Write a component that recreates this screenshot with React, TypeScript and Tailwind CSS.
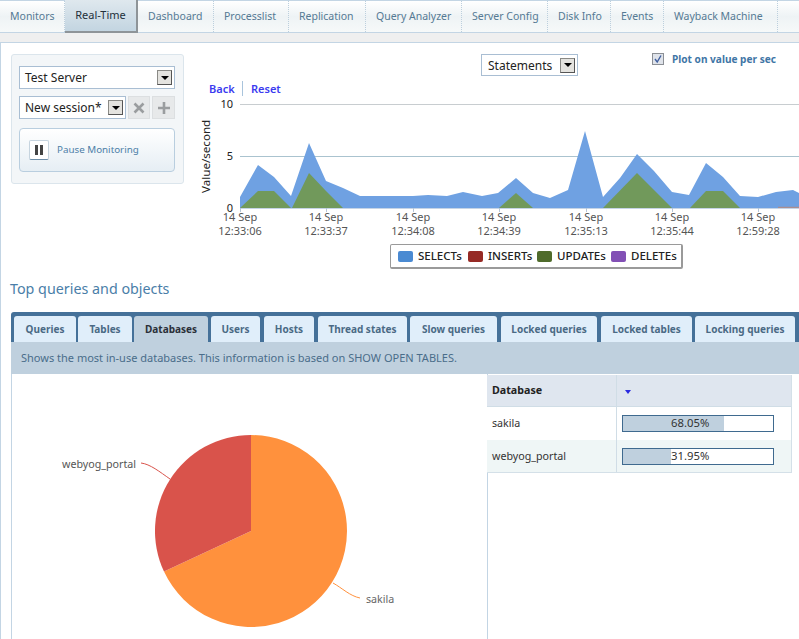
const nav = [
  { t: "Monitors", w: 65, px: 10 },
  { t: "Real-Time", w: 73, px: 10, active: true },
  { t: "Dashboard", w: 76, px: 10 },
  { t: "Processlist", w: 75, px: 10 },
  { t: "Replication", w: 77, px: 10 },
  { t: "Query Analyzer", w: 96, px: 10 },
  { t: "Server Config", w: 86, px: 10 },
  { t: "Disk Info", w: 63, px: 10 },
  { t: "Events", w: 53, px: 10 },
  { t: "Wayback Machine", w: 114, px: 10 },
];

const tabs = [
  { t: "Queries", x: 14, w: 62 },
  { t: "Tables", x: 78, w: 54 },
  { t: "Databases", x: 134, w: 74, active: true },
  { t: "Users", x: 211, w: 49 },
  { t: "Hosts", x: 264, w: 50 },
  { t: "Thread states", x: 318, w: 89 },
  { t: "Slow queries", x: 410, w: 87 },
  { t: "Locked queries", x: 501, w: 96 },
  { t: "Locked tables", x: 601, w: 91 },
  { t: "Locking queries", x: 695, w: 100 },
];

const ticks = [
  { x: 240, t: "12:33:06" },
  { x: 326, t: "12:33:37" },
  { x: 413, t: "12:34:08" },
  { x: 499, t: "12:34:39" },
  { x: 586, t: "12:35:13" },
  { x: 672, t: "12:35:44" },
  { x: 758, t: "12:59:28" },
];

const blue =
  "240,208 240,197 258,165 274,177 291,196 309,143 326,181 343,188 360,196 413,196 428,195 447,196 463,192 482,196 498,193 516,178 533,193 550,198 568,190 585,131 603,197 620,178 637,154 654,171 672,192 689,195 706,163 723,177 740,196 758,197 776,192 793,190 799,193 799,208";

function Arrow({ size = 15 }: { size?: number }) {
  return (
    <span
      className="flex items-center justify-center shrink-0 bg-[#e4e3df] border border-t-[#8a8a86] border-l-[#8a8a86] border-b-[#555] border-r-[#555]"
      style={{ width: size, height: size }}
    >
      <span className="block w-0 h-0 border-x-[4px] border-x-transparent border-t-[4px] border-t-black" />
    </span>
  );
}

function Select({ x, y, w, h, label, pl = 5 }: { x: number; y: number; w: number; h: number; label: string; pl?: number }) {
  return (
    <div
      className="absolute flex items-center justify-between bg-white border border-[#a9bed3] pr-[2px] text-[12px] text-[#222] font-['Liberation_Sans',sans-serif]"
      style={{ left: x, top: y, width: w, height: h, paddingLeft: pl }}
    >
      <span className="leading-none whitespace-nowrap pt-px">{label}</span>
      <Arrow />
    </div>
  );
}

export default function App() {
  return (
    <div className="relative w-[799px] h-[639px] overflow-hidden bg-white font-['Noto_Sans','DejaVu_Sans',sans-serif] text-[11px]">
      {/* Top nav */}
      <div className="absolute left-0 top-0 w-[799px] h-[33px] flex border-t border-b border-[#c3d5e4] bg-gradient-to-b from-white via-[#eef3f5] to-[#f6f9f9]">
        {nav.map((n) =>
          n.active ? (
            <div
              key={n.t}
              className="h-[33px] -mt-px flex items-center justify-center bg-gradient-to-b from-[#dfe8ee] to-[#c3d5e1] border-r-2 border-b-2 border-[#8e9498] text-[#23303b] text-[11px]"
              style={{ width: n.w }}
            >
              {n.t}
            </div>
          ) : (
            <div
              key={n.t}
              className="h-full flex items-center border-r border-dotted border-[#bccfdd] text-[#557a94] text-[10.5px]"
              style={{ width: n.w, paddingLeft: n.px }}
            >
              {n.t}
            </div>
          )
        )}
      </div>
      <div className="absolute left-0 top-[33px] w-[799px] h-[10px] bg-[#efefef] border-b border-[#c3d5e4]" />
      <div className="absolute left-0 top-[43px] w-px h-[596px] bg-[#c3d5e4]" />

      {/* Left panel */}
      <div className="absolute left-[11px] top-[54px] w-[173px] h-[130px] bg-[#f3f6f8] border border-[#dbe5ec] rounded-[3px]" />
      <Select x={19} y={66} w={156} h={23} label="Test Server" />
      <Select x={19} y={96} w={107} h={23} label="New session*" />
      <div className="absolute left-[128px] top-[96px] w-[22px] h-[23px] bg-[#e7e9ea] border border-[#dcdfe1] flex items-center justify-center">
        <svg width="12" height="12" viewBox="0 0 12 12">
          <path d="M1.5 1.5 L10.5 10.5 M10.5 1.5 L1.5 10.5" stroke="#9a9d9f" strokeWidth="2.6" />
        </svg>
      </div>
      <div className="absolute left-[152px] top-[96px] w-[23px] h-[23px] bg-[#e7e9ea] border border-[#dcdfe1] flex items-center justify-center">
        <svg width="12" height="12" viewBox="0 0 12 12">
          <path d="M6 0 V12 M0 6 H12" stroke="#9a9d9f" strokeWidth="2.6" />
        </svg>
      </div>
      <div className="absolute left-[19px] top-[128px] w-[156px] h-[44px] rounded-[4px] border border-[#b9cedf] bg-gradient-to-b from-white to-[#e6eef4] flex items-center pl-[9px]">
        <div className="w-[20px] h-[20px] bg-white border border-[#c6d4df] border-b-[#6d8da8] rounded-[2px] flex items-center justify-center gap-[2px]">
          <span className="block w-[3px] h-[10px] bg-[#444]" />
          <span className="block w-[3px] h-[10px] bg-[#444]" />
        </div>
        <span className="ml-[8px] text-[9.8px] text-[#4d80a8]">Pause Monitoring</span>
      </div>

      {/* Chart controls */}
      <Select x={481} y={54} w={97} h={22} label="Statements" pl={6} />
      <div className="absolute left-[652px] top-[53px] w-[12px] h-[12px] bg-[#dfe3ea] border border-[#8b8f95] flex items-center justify-center">
        <svg width="10" height="10" viewBox="0 0 10 10">
          <path d="M2 5 L4.2 8 L8 1.5" fill="none" stroke="#3f5f9f" strokeWidth="1.4" />
        </svg>
      </div>
      <div className="absolute left-[672px] top-[52px] text-[10.1px] leading-[14px] font-bold text-[#3f76a6]">Plot on value per sec</div>
      <div className="absolute left-[209px] top-[81px] text-[11px] leading-[16px] font-semibold text-[#3b3bf0]">Back</div>
      <div className="absolute left-[242px] top-[81px] w-px h-[15px] bg-[#a9c4dc]" />
      <div className="absolute left-[251px] top-[81px] text-[11px] leading-[16px] font-semibold text-[#3b3bf0]">Reset</div>

      {/* Chart */}
      <div className="absolute left-[199px] top-[193px] origin-top-left -rotate-90 w-[80px] text-[11.6px] leading-[14px] text-[#222] whitespace-nowrap">Value/second</div>
      <div className="absolute left-[200px] top-[97px] w-[33px] text-right text-[11px] leading-[14px] text-[#222]">10</div>
      <div className="absolute left-[200px] top-[149px] w-[33px] text-right text-[11px] leading-[14px] text-[#222]">5</div>
      <div className="absolute left-[200px] top-[204px] w-[33px] text-right text-[11px] leading-[8px] text-[#222]">0</div>
      <svg className="absolute left-0 top-0" width="799" height="225" viewBox="0 0 799 225">
        <line x1="240" y1="104.5" x2="799" y2="104.5" stroke="#c8cdd0" strokeWidth="1" />
        <line x1="240" y1="156.5" x2="799" y2="156.5" stroke="#aac3cf" strokeWidth="1" />
        <polygon points={blue} fill="#6fa1e2" />
        <polygon points="240,208 258,191 274,191 291,208 292,208 309,173 326,191 343,208" fill="#71995b" />
        <polygon points="499,208 516,193 533,208" fill="#71995b" />
        <polygon points="603,208 637,173 672,208" fill="#71995b" />
        <polygon points="690,208 706,191 723,191 740,208" fill="#71995b" />
        <line x1="778" y1="207.3" x2="799" y2="207.3" stroke="#b98a7c" strokeWidth="1" />
        <line x1="240" y1="208.5" x2="799" y2="208.5" stroke="#c5d4e6" strokeWidth="1" />
        {ticks.map((k) => (
          <line key={k.x} x1={k.x + 0.5} y1="208" x2={k.x + 0.5} y2="212" stroke="#b5c6d8" />
        ))}
      </svg>
      {ticks.map((k) => (
        <div
          key={k.x}
          className="absolute top-[210px] w-[70px] text-center text-[11px] leading-[13.5px] text-[#555]"
          style={{ left: k.x - 35 }}
        >
          <div>14 Sep</div>
          <div>{k.t}</div>
        </div>
      ))}

      {/* Legend */}
      <div className="absolute left-[390px] top-[244px] w-[293px] h-[25px] bg-white border border-[#9a9a9a] border-b-2 border-r-2 rounded-[2px] flex items-center pl-[7px] text-[11.5px] font-medium text-[#222]">
        <span className="w-[15px] h-[11px] rounded-[2px] bg-[#4a8ad2]" />
        <span className="ml-[5px] w-[50px]">SELECTs</span>
        <span className="w-[15px] h-[11px] rounded-[2px] bg-[#962a25]" />
        <span className="ml-[5px] w-[49px]">INSERTs</span>
        <span className="w-[15px] h-[11px] rounded-[2px] bg-[#4f6b2b]" />
        <span className="ml-[5px] w-[54px]">UPDATEs</span>
        <span className="w-[15px] h-[11px] rounded-[2px] bg-[#8250b5]" />
        <span className="ml-[5px]">DELETEs</span>
      </div>

      <div className="absolute left-[10px] top-[279px] text-[14.3px] leading-[20px] text-[#4a7ea8]">Top queries and objects</div>

      {/* Tab strip */}
      <div className="absolute left-[11px] top-[312px] w-[788px] h-[31px] bg-[#457199] rounded-tl-[3px]" />
      {tabs.map((t) => (
        <div
          key={t.t}
          className={
            t.active
              ? "absolute top-[316px] h-[27px] flex items-center justify-center rounded-t-[3px] bg-[#bfd0de] text-[10px] font-bold text-[#2a2f38]"
              : "absolute top-[316px] h-[27px] flex items-center justify-center rounded-t-[3px] bg-[#e0eefa] text-[10px] font-bold text-[#4a6a85]"
          }
          style={{ left: t.x, width: t.w }}
        >
          {t.t}
        </div>
      ))}
      <div className="absolute left-[11px] top-[342px] w-[788px] h-[32px] bg-[#bfd0de] flex items-center pl-[10px] text-[11px] text-[#4a6d8a]">
        Shows the most in-use databases. This information is based on SHOW OPEN TABLES.
      </div>
      <div className="absolute left-[11px] top-[374px] w-px h-[265px] bg-[#c3d5e4]" />
      <div className="absolute left-[487px] top-[374px] w-px h-[265px] bg-[#c3d5e4]" />

      {/* Table */}
      <div className="absolute left-[487px] top-[375px] w-[305px] h-[98px] border-r border-b border-[#d4e0e8] text-[10.7px] text-[#333]">
        <div className="flex h-[32px] bg-[#dfe6ef] border-b border-[#d0dde6]">
          <div className="w-[130px] border-r border-[#d0dde6] flex items-center pl-[5px] font-bold text-[#222]">Database</div>
          <div className="flex-1 flex items-center pl-[8px]">
            <span className="block mt-[3px] w-0 h-0 border-x-[3.5px] border-x-transparent border-t-[4px] border-t-[#2a2ae0]" />
          </div>
        </div>
        <div className="flex h-[33px] bg-white">
          <div className="w-[130px] border-r border-[#d0dde6] flex items-center pl-[5px]">sakila</div>
          <div className="flex-1 flex items-center pl-[4px]">
            <div className="relative w-[152px] h-[17px] ml-px bg-white border border-[#3f6a8f]">
              <div className="absolute left-0 top-0 h-full bg-[#bfd0de] w-[67%]" />
              <div className="absolute left-[48px] top-0 h-full flex items-center text-[11.3px] text-[#333]">68.05%</div>
            </div>
          </div>
        </div>
        <div className="flex h-[32px] bg-[#eff6f6]">
          <div className="w-[130px] border-r border-[#d0dde6] flex items-center pl-[5px]">webyog_portal</div>
          <div className="flex-1 flex items-center pl-[4px]">
            <div className="relative w-[152px] h-[17px] ml-px bg-white border border-[#3f6a8f]">
              <div className="absolute left-0 top-0 h-full bg-[#bfd0de] w-[32%]" />
              <div className="absolute left-[48px] top-0 h-full flex items-center text-[11.3px] text-[#333]">31.95%</div>
            </div>
          </div>
        </div>
      </div>

      {/* Pie */}
      <svg className="absolute left-[100px] top-[420px]" width="320" height="219" viewBox="100 420 320 219">
        <path d="M251 531 L251 435 A96 96 0 1 1 164 571.6 Z" fill="#ff913d" />
        <path d="M251 531 L164 571.6 A96 96 0 0 1 251 435 Z" fill="#d9534b" />
        <path d="M141 463 C150 464 160 472 170 479" fill="none" stroke="#d9534b" strokeWidth="1" />
        <path d="M333 583 C342 588 350 596 360 598" fill="none" stroke="#ff913d" strokeWidth="1" />
      </svg>
      <div className="absolute left-[62px] top-[457px] text-[10.7px] leading-[14px] text-[#555]">webyog_portal</div>
      <div className="absolute left-[366px] top-[592px] text-[10.7px] leading-[14px] text-[#666]">sakila</div>
    </div>
  );
}
